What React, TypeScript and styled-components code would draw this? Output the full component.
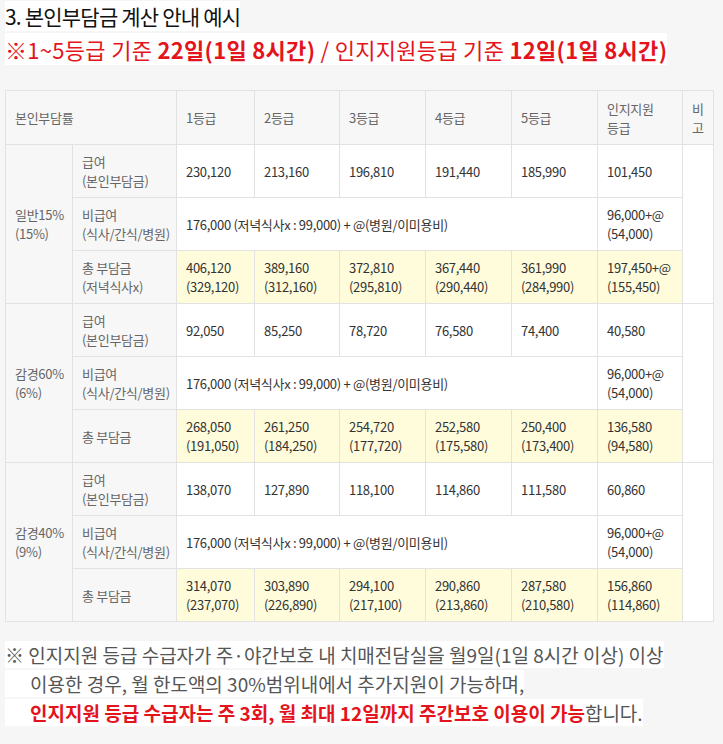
import React from "react";
import styled, { createGlobalStyle } from "styled-components";

const GlobalStyle = createGlobalStyle`
  html, body {
    margin: 0;
    padding: 0;
    background: #f6f6f6;
  }
  body {
    font-family: "Noto Sans CJK KR", "Noto Sans", sans-serif;
  }
`;

const Page = styled.div`
  padding: 3px 10px 20px 5px;
`;

const Title = styled.h2`
  margin: 0;
  font-size: 21px;
  line-height: 27px;
  font-weight: 400;
  color: #111;
  letter-spacing: -0.8px;
`;

const Highlight = styled.span<{ $indent?: boolean }>`
  background: #fff;
  padding-left: ${(p) => (p.$indent ? "25px" : "0")};
`;

const RedLine = styled.p`
  margin: 6px 0 0;
  font-size: 22px;
  line-height: 27px;
  color: #e3141b;
  letter-spacing: 0.3px;
`;

const Bold = styled.b`
  font-weight: 700;
`;

const Table = styled.table`
  margin-top: 27px;
  width: 708px;
  border-collapse: collapse;
  table-layout: fixed;
  background: #fff;
  font-size: 13px;
  line-height: 19px;
  color: #333;
  letter-spacing: -0.3px;
  border: 1px solid #e2e2e2;
`;

const Row = styled.tr<{ $head?: boolean }>`
  height: ${(p) => (p.$head ? "54px" : "53px")};
`;

type Tone = "white" | "gray" | "yellow";

const toneColor: Record<Tone, string> = {
  white: "#ffffff",
  gray: "#f7f7f7",
  yellow: "#fffcdc",
};

const Cell = styled.td<{ $tone?: Tone; $muted?: boolean; $tight?: boolean }>`
  border: 1px solid #e2e2e2;
  padding: ${(p) => (p.$tight ? "0 4px 0 9px" : "0 9px")};
  vertical-align: middle;
  text-align: left;
  font-weight: 400;
  background: ${(p) => toneColor[p.$tone ?? "white"]};
  color: ${(p) => (p.$muted ? "#666" : "#333")};
  white-space: nowrap;
`;

const Note = styled.div`
  margin-top: 18px;
  font-size: 19px;
  line-height: 29px;
  color: #555;
`;

const NoteLine = styled.div``;

const RedStrong = styled.b`
  color: #e3141b;
  font-weight: 700;
`;

const cols = [67, 104, 78, 85, 86, 86, 86, 85, 31];

type Group = {
  label: [string, string];
  pay: string[];
  totalLabel: string[];
  totals: [string, string][];
};

const groups: Group[] = [
  {
    label: ["일반15%", "(15%)"],
    pay: ["230,120", "213,160", "196,810", "191,440", "185,990", "101,450"],
    totalLabel: ["총 부담금", "(저녁식사x)"],
    totals: [
      ["406,120", "(329,120)"],
      ["389,160", "(312,160)"],
      ["372,810", "(295,810)"],
      ["367,440", "(290,440)"],
      ["361,990", "(284,990)"],
      ["197,450+@", "(155,450)"],
    ],
  },
  {
    label: ["감경60%", "(6%)"],
    pay: ["92,050", "85,250", "78,720", "76,580", "74,400", "40,580"],
    totalLabel: ["총 부담금"],
    totals: [
      ["268,050", "(191,050)"],
      ["261,250", "(184,250)"],
      ["254,720", "(177,720)"],
      ["252,580", "(175,580)"],
      ["250,400", "(173,400)"],
      ["136,580", "(94,580)"],
    ],
  },
  {
    label: ["감경40%", "(9%)"],
    pay: ["138,070", "127,890", "118,100", "114,860", "111,580", "60,860"],
    totalLabel: ["총 부담금"],
    totals: [
      ["314,070", "(237,070)"],
      ["303,890", "(226,890)"],
      ["294,100", "(217,100)"],
      ["290,860", "(213,860)"],
      ["287,580", "(210,580)"],
      ["156,860", "(114,860)"],
    ],
  },
];

const Lines: React.FC<{ lines: string[] }> = ({ lines }) => (
  <>
    {lines.map((l, i) => (
      <React.Fragment key={i}>
        {i > 0 && <br />}
        {l}
      </React.Fragment>
    ))}
  </>
);

const headers = ["1등급", "2등급", "3등급", "4등급", "5등급"];

export default function App() {
  return (
    <>
      <GlobalStyle />
      <Page>
        <Title>
          <Highlight>3. 본인부담금 계산 안내 예시</Highlight>
        </Title>
        <RedLine>
          <Highlight>
            ※1~5등급 기준 <Bold>22일(1일 8시간)</Bold> / 인지지원등급 기준{" "}
            <Bold>12일(1일 8시간)</Bold>
          </Highlight>
        </RedLine>

        <Table>
          <colgroup>
            {cols.map((w, i) => (
              <col key={i} style={{ width: w }} />
            ))}
          </colgroup>
          <thead>
            <Row $head>
              <Cell as="th" colSpan={2} $tone="gray" $muted>
                본인부담률
              </Cell>
              {headers.map((h) => (
                <Cell as="th" key={h} $tone="gray" $muted>
                  {h}
                </Cell>
              ))}
              <Cell as="th" $tone="gray" $muted>
                인지지원
                <br />
                등급
              </Cell>
              <Cell as="th" $tone="gray" $muted>
                비
                <br />고
              </Cell>
            </Row>
          </thead>
          <tbody>
            {groups.map((g) => (
              <React.Fragment key={g.label[0]}>
                <Row>
                  <Cell rowSpan={3} $tone="gray" $muted $tight>
                    <Lines lines={g.label} />
                  </Cell>
                  <Cell $tone="gray" $muted $tight>
                    급여
                    <br />
                    (본인부담금)
                  </Cell>
                  {g.pay.map((v, i) => (
                    <Cell key={i}>{v}</Cell>
                  ))}
                  <Cell rowSpan={3} />
                </Row>
                <Row>
                  <Cell $tone="gray" $muted $tight>
                    비급여
                    <br />
                    (식사/간식/병원)
                  </Cell>
                  <Cell colSpan={5}>
                    176,000 (저녁식사x : 99,000) + @(병원/이미용비)
                  </Cell>
                  <Cell>
                    96,000+@
                    <br />
                    (54,000)
                  </Cell>
                </Row>
                <Row>
                  <Cell $tone="gray" $muted $tight>
                    <Lines lines={g.totalLabel} />
                  </Cell>
                  {g.totals.map((t, i) => (
                    <Cell key={i} $tone="yellow">
                      <Lines lines={t} />
                    </Cell>
                  ))}
                </Row>
              </React.Fragment>
            ))}
          </tbody>
        </Table>

        <Note>
          <NoteLine>
            <Highlight>
              ※ 인지지원 등급 수급자가 주·야간보호 내 치매전담실을 월9일(1일 8시간
              이상) 이상
            </Highlight>
          </NoteLine>
          <NoteLine>
            <Highlight $indent>
              이용한 경우, 월 한도액의 30%범위내에서 추가지원이 가능하며,
            </Highlight>
          </NoteLine>
          <NoteLine>
            <Highlight $indent>
              <RedStrong>
                인지지원 등급 수급자는 주 3회, 월 최대 12일까지 주간보호 이용이 가능
              </RedStrong>
              합니다.
            </Highlight>
          </NoteLine>
        </Note>
      </Page>
    </>
  );
}
